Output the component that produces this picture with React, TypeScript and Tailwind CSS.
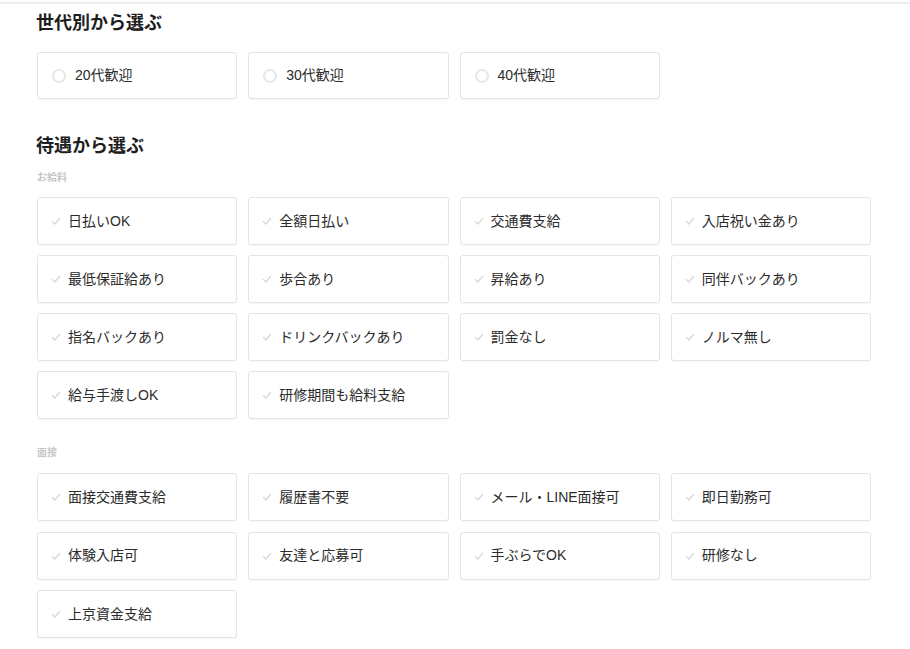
const font = { fontFamily: '"Liberation Sans", "Noto Sans CJK JP", sans-serif' };

const generations = ["20代歓迎", "30代歓迎", "40代歓迎"];

const salary = [
  "日払いOK",
  "全額日払い",
  "交通費支給",
  "入店祝い金あり",
  "最低保証給あり",
  "歩合あり",
  "昇給あり",
  "同伴バックあり",
  "指名バックあり",
  "ドリンクバックあり",
  "罰金なし",
  "ノルマ無し",
  "給与手渡しOK",
  "研修期間も給料支給",
];

const interview = [
  "面接交通費支給",
  "履歴書不要",
  "メール・LINE面接可",
  "即日勤務可",
  "体験入店可",
  "友達と応募可",
  "手ぶらでOK",
  "研修なし",
  "上京資金支給",
];

function CheckIcon() {
  return (
    <svg width="10" height="8" viewBox="0 0 10 8" fill="none" className="shrink-0">
      <path d="M1 4.2 L3.8 7 L9 1" stroke="#d6d6d6" strokeWidth="1.2" />
    </svg>
  );
}

function RadioCard({ label }: { label: string }) {
  return (
    <label className="flex items-center h-[47px] pl-[14px] gap-[9px] border border-[#e4e4e4] rounded-[3px] bg-white shadow-[0_1px_1px_rgba(0,0,0,0.03)] cursor-pointer">
      <span className="w-[14px] h-[14px] rounded-full border-2 border-[#e8e8e8] shrink-0" />
      <span className="text-[14px] text-[#2b2b2b]">{label}</span>
    </label>
  );
}

function CheckCard({ label }: { label: string }) {
  return (
    <label className="flex items-center h-[48px] pl-[13px] gap-[8px] border border-[#e4e4e4] rounded-[3px] bg-white shadow-[0_1px_1px_rgba(0,0,0,0.03)] cursor-pointer">
      <CheckIcon />
      <span className="text-[14px] text-[#2b2b2b] -ml-[1px]">{label}</span>
    </label>
  );
}

export default function App() {
  return (
    <div className="w-[910px] h-[649px] bg-white overflow-hidden" style={font}>
      <div className="mt-[2px] border-t-2 border-[#eeeeee]" />
      <div className="pl-[37px] w-[871px]">
        <h2 className="mt-[7px] text-[18px] leading-[24px] font-bold text-[#1e1e1e] -ml-[1px]">世代別から選ぶ</h2>
        <div className="mt-[17px] grid grid-cols-4 gap-x-[11px]">
          {generations.map((g) => (
            <RadioCard key={g} label={g} />
          ))}
        </div>

        <h2 className="mt-[35px] text-[18px] leading-[24px] font-bold text-[#1e1e1e] -ml-[1px]">待遇から選ぶ</h2>
        <p className="mt-[13px] text-[10px] leading-[14px] font-bold text-[#c6c6c6]">お給料</p>
        <div className="mt-[12px] grid grid-cols-4 gap-x-[11px] gap-y-[10px]">
          {salary.map((s) => (
            <CheckCard key={s} label={s} />
          ))}
        </div>

        <p className="mt-[27px] text-[10px] leading-[14px] font-bold text-[#c6c6c6]">面接</p>
        <div className="mt-[13px] grid grid-cols-4 gap-x-[11px] gap-y-[10.5px]">
          {interview.map((s) => (
            <CheckCard key={s} label={s} />
          ))}
        </div>
      </div>
    </div>
  );
}
